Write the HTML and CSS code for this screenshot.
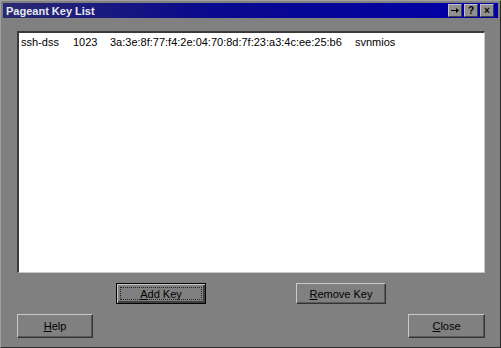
FILE: index.html
```html
<!DOCTYPE html>
<html lang="en">
<head>
    <meta charset="UTF-8">
    <title>Pageant Key List</title>
    <link rel="stylesheet" href="styles.css">
</head>
<body>
    <div class="window">
        <div class="titlebar">
            <span class="title">Pageant Key List</span>
            <div class="caption-buttons">
                <span class="cap-btn">
                    <svg width="8" height="7" viewBox="0 0 8 7"><path d="M0 3h5V1l3 2.5L5 6V4H0z" fill="#000"/></svg>
                </span>
                <span class="cap-btn">?</span>
                <span class="cap-btn close-x">&#215;</span>
            </div>
        </div>

        <div class="client">
            <div class="listbox">
                <div class="key-row">
                    <span class="col-type">ssh-dss</span>
                    <span class="col-bits">1023</span>
                    <span class="col-fp">3a:3e:8f:77:f4:2e:04:70:8d:7f:23:a3:4c:ee:25:b6</span>
                    <span class="col-name">svnmios</span>
                </div>
            </div>

            <div class="key-buttons">
                <button class="btn btn-default"><span class="focus"><u>A</u>dd Key</span></button>
                <button class="btn"><u>R</u>emove Key</button>
            </div>

            <div class="bottom-buttons">
                <button class="btn btn-small"><u>H</u>elp</button>
                <button class="btn btn-small"><u>C</u>lose</button>
            </div>
        </div>
    </div>
</body>
</html>
```

FILE: styles.css
```css
body {
    margin: 0;
    background: #808080;
    font-family: "Liberation Sans", Arial, sans-serif;
    font-size: 11px;
}

.window {
    width: 501px;
    height: 348px;
    box-sizing: border-box;
    background: #808080;
    border-top: 1px solid #a0a0a0;
    border-left: 1px solid #a0a0a0;
    border-right: 1px solid #2a2a2a;
    border-bottom: 1px solid #2a2a2a;
    padding: 2px;
    display: flex;
    flex-direction: column;
}

.titlebar {
    height: 18px;
    background: linear-gradient(to right, #2a2a70, #0a0a8c 40%, #0000a8);
    display: flex;
    align-items: center;
    justify-content: space-between;
    padding: 0 4px 0 3px;
}

.title {
    color: #e8e8f0;
    font-weight: bold;
    font-size: 11px;
}

.caption-buttons {
    display: flex;
    gap: 2px;
}

.cap-btn {
    width: 12px;
    height: 11px;
    background: #909090;
    border-top: 1px solid #c0c0c0;
    border-left: 1px solid #c0c0c0;
    border-right: 1px solid #404040;
    border-bottom: 1px solid #404040;
    font-size: 10px;
    font-weight: bold;
    line-height: 11px;
    text-align: center;
    color: #000;
    display: flex;
    align-items: center;
    justify-content: center;
}

.client {
    flex: 1;
    padding: 13px 13px 7px 14px;
    display: flex;
    flex-direction: column;
}

.listbox {
    height: 235px;
    background: #fff;
    border-top: 2px solid #3a3a3a;
    border-left: 2px solid #3a3a3a;
    border-right: 1px solid #c8c8c8;
    border-bottom: 1px solid #c8c8c8;
    padding: 2px 2px;
}

.key-row {
    display: flex;
    color: #000;
    line-height: 14px;
}

.col-type { width: 52px; }
.col-bits { width: 37px; }
.col-fp { width: 245px; }

.key-buttons {
    display: flex;
    justify-content: space-between;
    padding: 10px 99px 0 99px;
}

.bottom-buttons {
    display: flex;
    justify-content: space-between;
    margin-top: 10px;
}

.btn {
    width: 90px;
    height: 21px;
    padding: 0;
    background: #808080;
    font-family: "Liberation Sans", Arial, sans-serif;
    font-size: 11px;
    color: #000;
    border-top: 1px solid #c8c8c8;
    border-left: 1px solid #c8c8c8;
    border-right: 1px solid #333;
    border-bottom: 1px solid #333;
    box-shadow: inset -1px -1px 0 #5a5a5a;
}

.btn-default {
    border: 1px solid #000;
    box-shadow: inset 1px 1px 0 #c8c8c8, inset -2px -2px 0 #404040;
    padding: 3px;
}

.focus {
    display: block;
    height: 100%;
    box-sizing: border-box;
    border: 1px dotted #222;
    line-height: 13px;
}

.btn-small {
    width: 76px;
    height: 24px;
}

.btn-small:last-child {
    width: 77px;
}
```
